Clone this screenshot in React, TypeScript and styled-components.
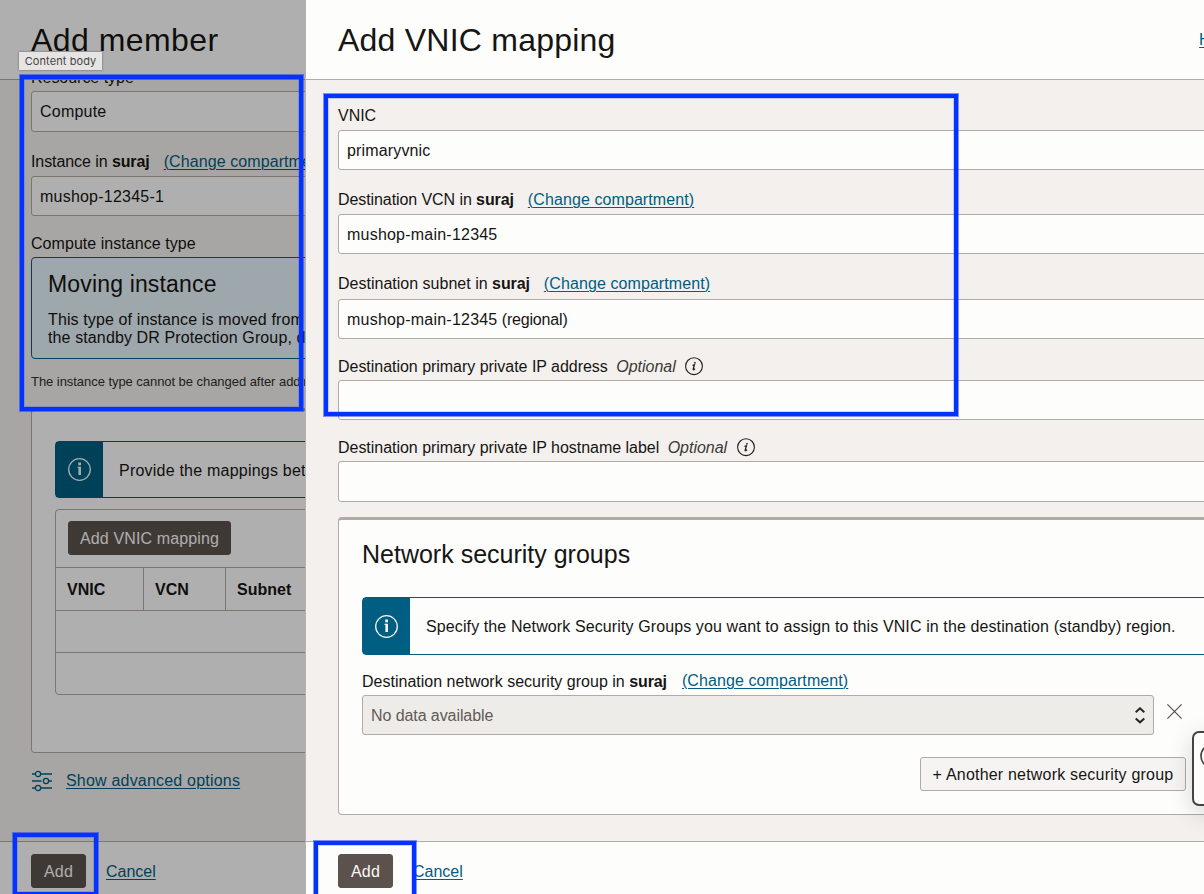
import React from 'react';
import styled, { createGlobalStyle, css } from 'styled-components';

const GlobalStyle = createGlobalStyle`
  * { box-sizing: border-box; }
  html, body { margin: 0; height: 100%; overflow: hidden; }
  body {
    font-family: "Liberation Sans", Arial, sans-serif;
    font-size: 16px;
    line-height: 18px;
    color: #161513;
    background: #fdfdfc;
  }
`;

const LINE = '#b1aaa5';
const PAPER = '#fdfdfc';
const TEAL = '#005e82';

const Screen = styled.main`
  position: relative;
  display: grid;
  grid-template-columns: 306px minmax(0, 1fr);
  width: 1204px;
  height: 894px;
  overflow: hidden;
`;

const Drawer = styled.section<{ $dimmed?: boolean }>`
  position: relative;
  display: grid;
  grid-template-rows: 80px minmax(0, 1fr) 53px;
  min-width: 0;
  overflow: hidden;
  background: #f4f0ee;
  ${p => p.$dimmed && css`
    background: #f2f0ee;
    border-right: 1px solid #b0b0ae;
    &::after {
      content: '';
      position: absolute;
      inset: 0;
      background: rgba(0, 0, 0, 0.305);
    }
  `}
`;

const Header = styled.header<{ $left: number }>`
  display: flex;
  align-items: center;
  padding-left: ${p => p.$left}px;
  border-bottom: 1px solid ${LINE};
  background: ${PAPER};
  white-space: nowrap;
`;

const Title = styled.h1<{ $spacing: number }>`
  flex: none;
  margin: 0;
  font-size: 32px;
  line-height: 36px;
  font-weight: 400;
  letter-spacing: ${p => p.$spacing}px;
`;

const Body = styled.div<{ $left: number }>`
  overflow: hidden;
  padding-left: ${p => p.$left}px;
`;

const Form = styled.div<{ $scroll?: number }>`
  display: flex;
  flex-direction: column;
  width: 960px;
  margin-top: ${p => -(p.$scroll ?? 0)}px;
`;

const Label = styled.div<{ $gap?: number; $height?: number; $spacing?: number }>`
  display: flex;
  align-items: center;
  height: ${p => p.$height ?? 28}px;
  margin-top: ${p => p.$gap ?? 0}px;
  padding-top: 2px;
  white-space: pre;
  letter-spacing: ${p => p.$spacing ?? -0.03}px;
  b { letter-spacing: -0.1px; }
`;

const Link = styled.a<{ $left?: number; $raise?: number; $drop?: number; $spacing?: number }>`
  color: ${TEAL};
  margin-left: ${p => p.$left ?? 0}px;
  padding-top: ${p => p.$drop ?? 0}px;
  padding-bottom: ${p => p.$raise ?? 0}px;
  letter-spacing: ${p => p.$spacing ?? 0}px;
  text-decoration: underline;
  text-decoration-thickness: 1px;
  text-underline-offset: 2px;
  white-space: nowrap;
`;

const Optional = styled.em`
  margin: 0 9.5px 0 8.5px;
  color: #3b3936;
`;

const Field = styled.div<{ $height?: number; $disabled?: boolean; $spacing?: number }>`
  display: flex;
  align-items: center;
  justify-content: ${p => (p.$disabled ? 'space-between' : 'flex-start')};
  width: ${p => (p.$disabled ? '792px' : 'auto')};
  height: ${p => p.$height ?? 40}px;
  padding: ${p => (p.$height ? 0 : 2)}px 8px 0;
  border: 1px solid ${LINE};
  border-radius: 3px;
  background: ${p => (p.$disabled ? '#eeece9' : PAPER)};
  color: ${p => (p.$disabled ? '#625a56' : 'inherit')};
  letter-spacing: ${p => p.$spacing ?? 0.22}px;
  white-space: pre;
`;

const Qualifier = styled.span`
  letter-spacing: -0.18px;
`;

const TypeCard = styled.div`
  height: 102px;
  padding: 12px 16px;
  border: 1px solid ${TEAL};
  border-radius: 4px;
  background: #e4f1f7;
  h2 {
    margin: 0 0 13px;
    font-size: 23px;
    line-height: 28px;
    font-weight: 400;
    letter-spacing: 0.16px;
  }
  p {
    margin: 0;
    letter-spacing: 0.12px;
    white-space: pre;
  }
`;

const Note = styled.p`
  margin: 15px 0 18px;
  font-size: 13px;
  line-height: 16px;
  letter-spacing: -0.05px;
  color: #312d2a;
`;

const Panel = styled.div<{ $height: number; $top: number }>`
  height: ${p => p.$height}px;
  margin-top: ${p => p.$top}px;
  padding: 0 23px;
  border: 1px solid ${LINE};
  border-top-width: 3px;
  border-radius: 4px;
  background: ${PAPER};
`;

const PanelTitle = styled.h2`
  margin: 0;
  padding: 20px 0 29px;
  font-size: 25px;
  line-height: 28px;
  font-weight: 400;
  letter-spacing: 0;
`;

const Banner = styled.div<{ $height: number; $top?: number; $spacing?: number }>`
  display: flex;
  align-items: center;
  height: ${p => p.$height}px;
  margin-top: ${p => p.$top ?? 0}px;
  border: 1px solid ${TEAL};
  border-radius: 4px;
  letter-spacing: ${p => p.$spacing ?? 0.11}px;
  white-space: nowrap;
`;

const BannerText = styled.span`
  padding-top: 2px;
`;

const BannerMark = styled.span`
  display: flex;
  align-items: center;
  justify-content: center;
  align-self: stretch;
  width: 47px;
  margin-right: 16px;
  background: ${TEAL};
`;

const TableCard = styled.div`
  height: 186px;
  margin-top: 11px;
  border: 1px solid ${LINE};
  border-radius: 4px;
`;

const TableTools = styled.div`
  height: 57px;
  padding: 11px 12px;
`;

const TableRow = styled.div`
  display: flex;
  height: 42px;
  border-top: 1px solid ${LINE};
  &:nth-child(2) { height: 43px; }
`;

const HeadCell = styled.div<{ $width: number }>`
  display: flex;
  align-items: center;
  width: ${p => p.$width}px;
  padding: 2px 0 0 11px;
  border-right: 1px solid ${LINE};
  font-weight: 700;
`;

const Button = styled.button<{ $width: number; $plain?: boolean; $spacing?: number }>`
  width: ${p => p.$width}px;
  height: 34px;
  flex: none;
  padding: 2px 0 0;
  border: 1px solid ${p => (p.$plain ? LINE : '#5b524e')};
  border-radius: 3px;
  background: ${p => (p.$plain ? '#f6f4f2' : '#5b524e')};
  color: ${p => (p.$plain ? '#161513' : '#fbf9f8')};
  font: inherit;
  letter-spacing: ${p => p.$spacing ?? 0.2}px;
  white-space: nowrap;
`;

const Advanced = styled.div`
  display: flex;
  align-items: center;
  gap: 14px;
  height: 24px;
  margin-top: 16px;
`;

const Footer = styled.footer<{ $left: number }>`
  display: flex;
  align-items: center;
  gap: 20px;
  padding: 6px 0 0 ${p => p.$left}px;
  border-top: 1px solid ${LINE};
  background: ${PAPER};
`;

const SelectRow = styled.div`
  display: flex;
  gap: 13px;
  align-items: flex-start;
  > svg { margin-top: 9px; }
`;

const Actions = styled.div`
  display: flex;
  justify-content: flex-end;
  width: 824px;
  margin-top: 22px;
`;

const Tooltip = styled.div`
  position: absolute;
  left: 19px;
  top: 52px;
  width: 83px;
  height: 18px;
  background: #e7e5e4;
  color: #464443;
  font: 11px/18px Inter, sans-serif;
  letter-spacing: 0.1px;
  text-align: center;
  white-space: nowrap;
  box-shadow: 0 0 2px rgba(0, 0, 0, 0.45);
`;

const Highlight = styled.div<{ $x: number; $y: number; $w: number; $h: number }>`
  position: absolute;
  left: ${p => p.$x}px;
  top: ${p => p.$y}px;
  width: ${p => p.$w}px;
  height: ${p => p.$h}px;
  border: 4px solid #0432ff;
  box-shadow: 0 0 0 1px rgba(4, 50, 255, 0.5), inset 0 0 0 1px rgba(4, 50, 255, 0.2);
`;

const HelpWidget = styled.div`
  position: absolute;
  left: 1192px;
  top: 731px;
  width: 60px;
  height: 75px;
  padding: 10px 6px;
  border: 2px solid #454342;
  border-radius: 7px;
  background: ${PAPER};
  box-shadow: 0 6px 24px rgba(0, 0, 0, 0.16);
`;

const HeaderLink = styled(Link)`
  margin-left: 583.5px;
`;

const BannerInfo = () => (
  <svg width="23" height="23" viewBox="0 0 23 23" fill="none">
    <circle cx="11.5" cy="11.5" r="10.8" stroke="#f2f6f8" strokeWidth="1.3" />
    <path d="M11.6 4.5v2.8" stroke="#f2f6f8" strokeWidth="2.8" />
    <path d="M9.4 9.3h2.2" stroke="#f2f6f8" strokeWidth="1" />
    <path d="M11.7 8.8v8.2" stroke="#f2f6f8" strokeWidth="2.6" />
  </svg>
);

const InfoIcon = () => (
  <svg width="18" height="18" viewBox="0 0 18 18" fill="none" stroke="#201e1c" overflow="visible">
    <circle cx="9" cy="8.2" r="8.4" strokeWidth="1.1" />
    <circle cx="9.9" cy="4.8" r="0.65" fill="#201e1c" strokeWidth="0.6" />
    <path d="M7.5 7.4l1.9-.5-1.2 4.2c-.2.9.5.9 1.8-.4" strokeWidth="1.3" />
  </svg>
);

const SlidersIcon = () => (
  <svg width="21" height="22" viewBox="0 0 21 22" fill="none" stroke={TEAL} strokeWidth="1.3">
    <path d="M1 4h3.2M10 4h11M1 11h9.5M17.5 11H21M1 18h3.2M10 18h11" />
    <circle cx="7" cy="4" r="2.6" />
    <circle cx="15" cy="11" r="2.6" />
    <circle cx="7" cy="18" r="2.6" />
  </svg>
);

const SortIcon = () => (
  <svg width="10" height="18" viewBox="0 0 10 18" fill="none" stroke="#282523" strokeWidth="2">
    <path d="M.7 5.2L5 1.3l4.3 3.9M.7 11.4L5 15.3l4.3-3.9" />
  </svg>
);

const CloseIcon = () => (
  <svg width="15" height="15" viewBox="0 0 15 15" fill="none" stroke="#514b48" strokeWidth="1.1">
    <path d="M.4.4l14.2 14.2M14.6.4L.4 14.6" />
  </svg>
);

const CompartmentLink = ({ left = 14, raise = 0 }: { left?: number; raise?: number }) => (
  <Link $left={left} $raise={raise} $spacing={0.09}>(Change compartment)</Link>
);

function MemberDrawer() {
  return (
    <Drawer $dimmed>
      <Header $left={31}><Title $spacing={0.45}>Add member</Title></Header>
      <Body $left={31}>
        <Form $scroll={17}>
          <Label>Resource type</Label>
          <Field $height={41}>Compute</Field>
          <Label $gap={14} $height={30} $spacing={-0.08}>Instance in <b>suraj</b><CompartmentLink /></Label>
          <Field>mushop-12345-1</Field>
          <Label $gap={13} $spacing={0.05}>Compute instance type</Label>
          <TypeCard>
            <h2>Moving instance</h2>
            <p>{'This type of instance is moved from the primary to\nthe standby DR Protection Group, during recovery.'}</p>
          </TypeCard>
          <Note>The instance type cannot be changed after adding the member.</Note>
          <Panel $height={345} $top={0}>
            <Banner $height={57} $top={30} $spacing={0.22}>
              <BannerMark><BannerInfo /></BannerMark>
              <BannerText>Provide the mappings between VNICs and subnets.</BannerText>
            </Banner>
            <TableCard>
              <TableTools><Button $width={163} $spacing={0.12}>Add VNIC mapping</Button></TableTools>
              <TableRow>
                <HeadCell $width={88}>VNIC</HeadCell>
                <HeadCell $width={82}>VCN</HeadCell>
                <HeadCell $width={120}>Subnet</HeadCell>
              </TableRow>
              <TableRow />
              <TableRow />
            </TableCard>
          </Panel>
          <Advanced><SlidersIcon /><Link $spacing={0.2}>Show advanced options</Link></Advanced>
        </Form>
      </Body>
      <Footer $left={31}><Button $width={55}>Add</Button><Link $drop={2}>Cancel</Link></Footer>
    </Drawer>
  );
}

function MappingDrawer() {
  return (
    <Drawer>
      <Header $left={32}>
        <Title $spacing={0.23}>Add VNIC mapping</Title>
        <HeaderLink>Help</HeaderLink>
      </Header>
      <Body $left={32}>
        <Form>
          <Label $gap={20} $height={30}>VNIC</Label>
          <Field $spacing={0.15}>primaryvnic</Field>
          <Label $gap={14} $height={30} $spacing={-0.08}>Destination VCN in <b>suraj</b><CompartmentLink /></Label>
          <Field>mushop-main-12345</Field>
          <Label $gap={13} $height={32} $spacing={0.01}>Destination subnet in <b>suraj</b><CompartmentLink /></Label>
          <Field>mushop-main-12345<Qualifier> (regional)</Qualifier></Field>
          <Label $gap={13}>Destination primary private IP address<Optional>Optional</Optional><InfoIcon /></Label>
          <Field />
          <Label $gap={13}>Destination primary private IP hostname label<Optional>Optional</Optional><InfoIcon /></Label>
          <Field $height={41} />
          <Panel $height={298} $top={15}>
            <PanelTitle>Network security groups</PanelTitle>
            <Banner $height={58}>
              <BannerMark><BannerInfo /></BannerMark>
              <BannerText>
                Specify the Network Security Groups you want to assign to this VNIC in the destination (standby) region.
              </BannerText>
            </Banner>
            <Label $gap={12} $spacing={0.01}>
              Destination network security group in <b>suraj</b><CompartmentLink left={15} raise={2} />
            </Label>
            <SelectRow>
              <Field $disabled $spacing={-0.08}>No data available<SortIcon /></Field>
              <CloseIcon />
            </SelectRow>
            <Actions><Button $width={266} $plain>+ Another network security group</Button></Actions>
          </Panel>
        </Form>
      </Body>
      <Footer $left={32}><Button $width={55}>Add</Button><Link $drop={2}>Cancel</Link></Footer>
    </Drawer>
  );
}

export default function App() {
  return (
    <>
      <GlobalStyle />
      <Screen>
        <MemberDrawer />
        <MappingDrawer />
        <HelpWidget>
          <svg width="26" height="26" viewBox="0 0 26 26" fill="none">
            <circle cx="13" cy="13" r="12" stroke="#454342" strokeWidth="1.7" />
          </svg>
        </HelpWidget>
        <Tooltip>Content body</Tooltip>
        <Highlight $x={20} $y={75} $w={283} $h={336} />
        <Highlight $x={324} $y={94} $w={634} $h={322} />
        <Highlight $x={13} $y={833} $w={85} $h={63} />
        <Highlight $x={314} $y={841} $w={102} $h={70} />
      </Screen>
    </>
  );
}
